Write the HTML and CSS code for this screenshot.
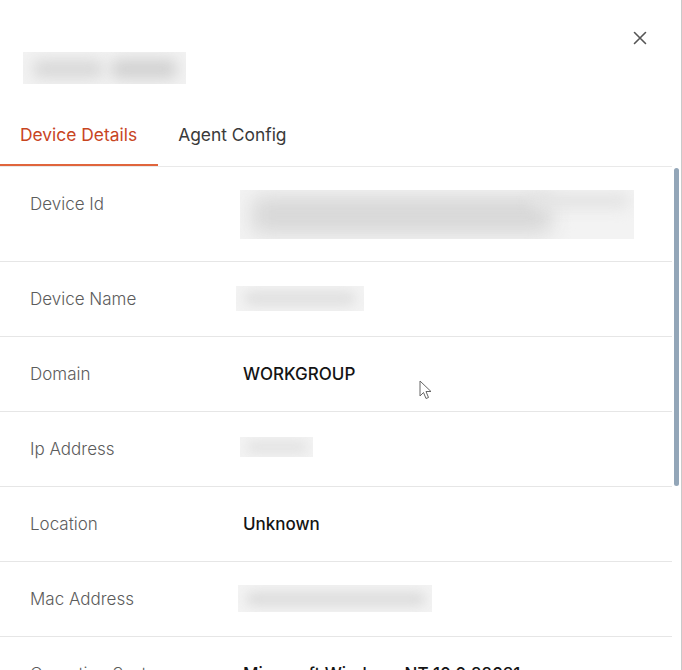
FILE: index.html
```html
<!DOCTYPE html>
<html>
<head>
<meta charset="utf-8">
<link rel="stylesheet" href="styles.css">
</head>
<body>
<div class="panel">
  <div class="header">
    <div class="title-blur"><div class="blob b1"></div><div class="blob b2"></div></div>
    <button class="close" aria-label="Close">
      <svg width="14" height="14" viewBox="0 0 14 14"><path d="M1.5 1.5 L12.5 12.5 M12.5 1.5 L1.5 12.5" stroke="#555" stroke-width="1.6" stroke-linecap="round"/></svg>
    </button>
  </div>
  <div class="tabs">
    <div class="tab active">Device Details</div>
    <div class="tab">Agent Config</div>
  </div>
  <div class="content">
    <div class="scroll">
      <div class="row">
        <div class="label">Device Id</div>
        <div class="value"><div class="blur blur-id"><div class="blob i1"></div><div class="blob i2"></div></div></div>
      </div>
      <div class="row">
        <div class="label">Device Name</div>
        <div class="value"><div class="blur blur-name"><div class="blob n1"></div></div></div>
      </div>
      <div class="row">
        <div class="label">Domain</div>
        <div class="value">WORKGROUP</div>
      </div>
      <div class="row">
        <div class="label">Ip Address</div>
        <div class="value"><div class="blur blur-ip"><div class="blob p1"></div></div></div>
      </div>
      <div class="row">
        <div class="label">Location</div>
        <div class="value">Unknown</div>
      </div>
      <div class="row">
        <div class="label">Mac Address</div>
        <div class="value"><div class="blur blur-mac"><div class="blob m1"></div></div></div>
      </div>
      <div class="row">
        <div class="label">Operating System</div>
        <div class="value">Microsoft Windows NT 10.0.22631</div>
      </div>
    </div>
    <div class="track"><div class="thumb"></div></div>
  </div>
  <svg class="cursor" width="14" height="22" viewBox="0 0 14 22"><path d="M1 1 L1 16 L4.5 12.5 L7 18.5 L9.5 17.5 L7 11.5 L12 11.5 Z" fill="#fff" stroke="#666" stroke-width="1" stroke-linejoin="round"/></svg>
</div>
</body>
</html>
```
FILE: styles.css
```css
html, body {
  margin: 0;
  padding: 0;
  background: #fff;
}
body {
  font-family: "Inter", "Liberation Sans", sans-serif;
}
.panel {
  position: relative;
  width: 681px;
  height: 670px;
  border-right: 1px solid #c9c9c9;
  display: flex;
  flex-direction: column;
  overflow: hidden;
}
.header {
  display: flex;
  align-items: flex-start;
  padding-top: 31px;
}
.title-blur {
  position: relative;
  margin-left: 23px;
  margin-top: 21px;
  width: 163px;
  height: 32px;
  background: #f2f2f2;
  overflow: hidden;
}
.blob {
  position: absolute;
  background: #d6d6d6;
  filter: blur(6px);
  border-radius: 8px;
}
.b1 { left: 10px; top: 8px; width: 70px; height: 18px; background: #d8d8d8; filter: blur(7px); }
.b2 { left: 88px; top: 7px; width: 66px; height: 20px; background: #d2d2d2; filter: blur(7px); }
.close {
  margin-left: auto;
  margin-right: 34px;
  width: 14px;
  height: 14px;
  padding: 0;
  border: none;
  background: none;
  display: flex;
}
.tabs {
  display: flex;
  margin-top: 25px;
  margin-right: 9px;
  border-bottom: 1px solid #e9e9e9;
}
.tab {
  padding: 16px 21px 19px 20px;
  line-height: 20px;
  font-size: 17.4px;
  color: #3a3a3a;
  border-bottom: 2px solid transparent;
}
.tab.active {
  color: #c8451f;
  border-bottom-color: #e0653c;
}
.content {
  flex: 1;
  min-height: 0;
  display: flex;
}
.scroll {
  flex: 1;
  overflow: hidden;
}
.track {
  width: 9px;
  padding-top: 1px;
}
.thumb {
  margin-left: 2px;
  width: 5px;
  height: 318px;
  border-radius: 3px;
  background: #93a6b8;
}
.row {
  display: grid;
  grid-template-columns: 213px 1fr;
  padding: 27px 0 27px 30px;
  border-bottom: 1px solid #e6e6e6;
  line-height: 20px;
}
.label {
  font-size: 17px;
  color: #5c5c5c;
  font-weight: 300;
}
.value {
  font-size: 17px;
  color: #141414;
  font-weight: 500;
}
.blur {
  position: relative;
  background: #f3f3f3;
  overflow: hidden;
}
.blur-id {
  width: 394px;
  height: 49px;
  margin: -4px 0 -5px -3px;
}
.i1 { left: 12px; top: 6px; width: 300px; height: 38px; background: #d8d8d8; filter: blur(10px); }
.i2 { left: 290px; top: 3px; width: 100px; height: 16px; background: #e4e4e4; filter: blur(7px); }
.blur-name {
  width: 128px;
  height: 25px;
  margin: -3px 0 -2px -7px;
}
.n1 { left: 8px; top: 5px; width: 112px; height: 15px; background: #e0e0e0; }
.blur-ip {
  width: 73px;
  height: 20px;
  margin: -2px 0 0 -3px;
}
.p1 { left: 6px; top: 4px; width: 62px; height: 12px; background: #e2e2e2; }
.blur-mac {
  width: 194px;
  height: 27px;
  margin: -4px 0 -3px -5px;
}
.m1 { left: 8px; top: 7px; width: 180px; height: 14px; background: #dcdcdc; }
.cursor {
  position: absolute;
  left: 419px;
  top: 380px;
}
```
